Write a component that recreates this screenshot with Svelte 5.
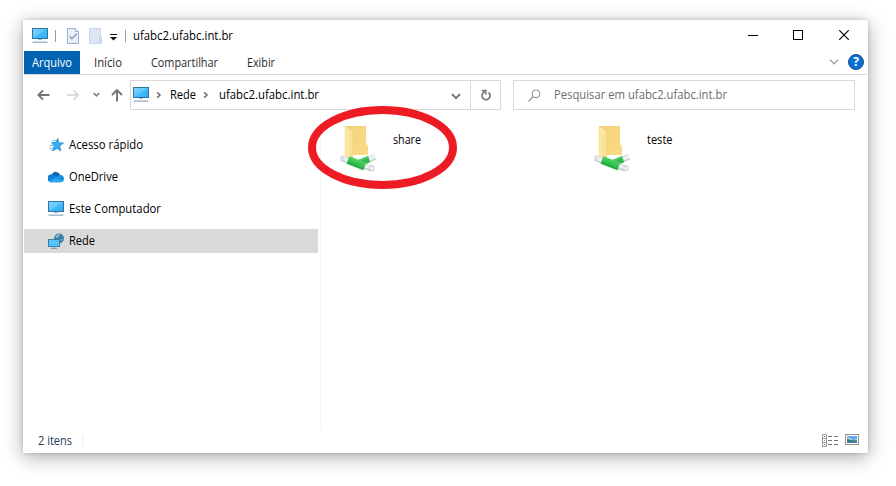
<script>
  const tabs = [
    { label: 'Início', width: 28, gap: 14 },
    { label: 'Compartilhar', width: 67, gap: 29 },
    { label: 'Exibir', width: 28, gap: 29 }
  ];
  const places = [
    { label: 'Acesso rápido', icon: 'star', width: 74 },
    { label: 'OneDrive', icon: 'cloud', width: 49 },
    { label: 'Este Computador', icon: 'pc', width: 92 },
    { label: 'Rede', icon: 'network', width: 26, active: true }
  ];
  const shares = [
    { label: 'share', width: 28 },
    { label: 'teste', width: 25.5 }
  ];
</script>

{#snippet label(text, width)}
  <svg class="label" style:width="{width}px" height="18"><text x="0" y="13" textLength={width} lengthAdjust="spacingAndGlyphs">{text}</text></svg>
{/snippet}

{#snippet monitor()}
  <svg class="icon16" viewBox="0 0 16 16">
    <defs><linearGradient id="screen" x1="0" y1="0" x2="1" y2="1"><stop offset="0" stop-color="#83d5ff" /><stop offset=".5" stop-color="#5cc5fb" /><stop offset=".52" stop-color="#42b9fa" /><stop offset="1" stop-color="#2caaf8" /></linearGradient></defs>
    <rect x=".5" y=".5" width="15" height="10" fill="url(#screen)" stroke="#34739c" />
    <path d="M6 11h4v1H6z" fill="#9eb7c5" />
    <path d="M1.5 13.2h13l1.5 1.6H0z" fill="#8eabbc" /><path d="M1.5 13.5h13" stroke="#d5e3eb" stroke-width=".7" />
  </svg>
{/snippet}

{#snippet chevron()}
  <svg class="crumb" width="6" height="8" viewBox="0 0 6 8"><path d="M1.2 1.3 4 4 1.2 6.7" fill="none" stroke="#707070" stroke-width="1.6" /></svg>
{/snippet}

<div class="desktop">
  <main class="window">
    <header class="title">
      <span class="app">{@render monitor()}</span>
      <i class="rule"></i>
      <svg class="check" width="12" height="16" viewBox="0 0 12 16">
        <path d="M.5.5h8l3 3v12H.5z" fill="#eaf0f9" stroke="#9bafd0" /><path d="M8.5.5v3h3" fill="#fff" stroke="#9bafd0" />
        <path d="m2.5 8.3 2.4 2.4L9.8 5.8" fill="none" stroke="#899dc2" stroke-width="1.4" />
      </svg>
      <svg class="new" width="13" height="16" viewBox="0 0 13 16"><path d="M.5.5h11v8.8h1v6.2H.5z" fill="#dde6f3" stroke="#c9d5e9" /><path d="M10.5 15V9.5h1" fill="none" stroke="#c0cde3" /></svg>
      <svg class="more" width="7" height="7" viewBox="0 0 7 7"><path d="M0 0h7v1H0zM0 3h7L3.5 6.5z" fill="#111" /></svg>
      <i class="rule"></i>
      <span class="caption">{@render label('ufabc2.ufabc.int.br', 100)}</span>
      <div class="controls">
        <svg width="10" height="10"><path d="M0 5.5h10" stroke="#000" /></svg>
        <svg width="10" height="10"><rect x=".5" y=".5" width="9" height="9" fill="none" stroke="#000" /></svg>
        <svg width="10" height="10"><path d="m.2.2 9.6 9.6m0-9.6L.2 9.8" stroke="#000" stroke-width="1.15" /></svg>
      </div>
    </header>
    <nav class="ribbon">
      <span class="file">{@render label('Arquivo', 40)}</span>
      {#each tabs as tab}
        <span style:margin-left="{tab.gap}px">{@render label(tab.label, tab.width)}</span>
      {/each}
      <div class="help">
        <svg width="10" height="6" viewBox="0 0 10 6"><path d="m1 .8 4 4 4-4" fill="none" stroke="#a0a0a0" stroke-width="1.3" /></svg>
        <b>?</b>
      </div>
    </nav>
    <div class="toolbar">
      <svg class="arrows" width="86" height="14" viewBox="0 0 86 14" fill="none">
        <path d="M12.5 7H1.5M6 2.3 1.3 7 6 11.7" stroke="#737373" stroke-width="1.8" />
        <path d="M30 7h11M36.5 2.3 41.2 7l-4.7 4.7" stroke="#d4d4d4" stroke-width="1.5" />
        <path d="m56.6 5 2.8 2.8L62.2 5" stroke="#808080" stroke-width="1.6" />
        <path d="M80 13.5V2.2M75 7l5-5 5 5" stroke="#737373" stroke-width="1.9" />
      </svg>
      <div class="address">
        {@render monitor()}
        {@render chevron()}
        <span class="root">{@render label('Rede', 26)}</span>
        {@render chevron()}
        <span class="host">{@render label('ufabc2.ufabc.int.br', 100)}</span>
        <svg class="drop" width="10" height="7" viewBox="0 0 10 7"><path d="m1 1.2 4 4 4-4" fill="none" stroke="#737373" stroke-width="1.9" /></svg>
        <div class="refresh"><svg width="12" height="12" viewBox="0 0 12 12" fill="none" stroke="#737373"><path d="M8.6 3.5A4 4 0 1 1 2.7 4.4L5.3 2" stroke-width="1.7" /><path d="M1.8 1.5h4.1v4.2" stroke-width="1.4" /></svg></div>
      </div>
      <div class="search">
        <svg width="13" height="13" viewBox="0 0 13 13"><circle cx="8" cy="4.8" r="3.9" fill="none" stroke="#8a8a92" /><path d="M5.2 7.6.5 12.3" stroke="#8a8288" stroke-width="1.1" /></svg>
        {@render label('Pesquisar em ufabc2.ufabc.int.br', 173)}
      </div>
    </div>
    <section class="content">
      <aside>
        {#each places as place}
          <div class="place" class:active={place.active}>
            {#if place.icon === 'star'}
              <svg class="icon16" viewBox="0 0 16 16"><path d="m9.8 1.5.9 4.3 4.8.2-3.8 3 1 4.9-3.7-2.6-4.3 2.5 1.6-4.7-2.6-3.4 4-.1z" fill="#37aef4" stroke="#1685d0" stroke-width=".8" /><path d="M5 3.5h2.5M3 5h2M2 8.5h3.5M1.5 11H5M2.5 13h2" stroke="#65b8e8" stroke-width=".9" /></svg>
            {:else if place.icon === 'cloud'}
              <svg class="icon16" viewBox="0 0 16 16"><path d="M4 5.2a4.5 4.5 0 0 1 8.2.7L14 8.5l-8 1z" fill="#0a62b3" /><path d="M3.4 13.2A4 4 0 0 1 3.6 5.2c2.2 0 3.4 1 4.5 2l4 4-2 1.2z" fill="#1180d3" /><path d="M8 8.5c1-1.6 2.4-2.2 4.1-2.4A3.6 3.6 0 0 1 16 9.8c0 1.8-1.4 3.4-3.4 3.4H3.2c-1 0-1.8-.4-2.3-1z" fill="#1490df" /><path d="m8 8.5 7.5 3.5c-.7.8-1.6 1.2-2.9 1.2H3.2c-1 0-1.8-.4-2.3-1z" fill="#28a8ea" /></svg>
            {:else if place.icon === 'pc'}
              {@render monitor()}
            {:else}
              <svg class="icon16" viewBox="0 0 16 16"><circle cx="11" cy="5.5" r="5" fill="#3c7fa5" /><path d="M7.5 3Q10 .5 12.5 1.5L10.5 4 8 5z" fill="#86bdd2" /><path d="m14 5 1 2-2 1z" fill="#86bdd2" /><rect x=".5" y="6.5" width="11" height="7" fill="#59c4fb" stroke="#397ca4" /><path d="M3 15.4h6M5 14h2" stroke="#7b9daf" /></svg>
            {/if}
            {@render label(place.label, place.width)}
          </div>
        {/each}
      </aside>
      <div class="files">
        {#each shares as share}
          <div class="share">
            <svg width="38" height="48" viewBox="0 0 38 48">
              <defs>
                <linearGradient id="back" x1="0" y1="0" x2="1" y2="1"><stop stop-color="#f0cf78" /><stop offset="1" stop-color="#ffdd86" /></linearGradient>
                <linearGradient id="front" x1="0" y1="0" x2="1" y2="0"><stop stop-color="#ffe9aa" /><stop offset="1" stop-color="#fbdd8d" /></linearGradient>
                <linearGradient id="tube" gradientUnits="userSpaceOnUse" x1="18" y1="34" x2="14.6" y2="42"><stop stop-color="#58d168" /><stop offset=".5" stop-color="#35c552" /><stop offset="1" stop-color="#1fa540" /></linearGradient>
              </defs>
              <path d="M5 1h21v18l2 2v9H5z" fill="url(#back)" />
              <path d="m5 1 8 5v28l-8-3z" fill="url(#front)" stroke="#eccf7c" stroke-width=".4" />
              <path d="m1.5 33.3 7 2.4M29 34.3l6-2.3M24 41.2l7.5 2.3" stroke="#c6cccd" stroke-width="5.8" />
              <path d="m1.5 32.8 7 2.4M29 33.8l6-2.3M24 40.6l7.5 2.3" stroke="#eef1f2" stroke-width="3.6" />
              <path d="m17 39 12-4.9" stroke="#2db64a" stroke-width="6.6" />
              <path d="m18 36.2 10.3-4.1" stroke="#54ce65" stroke-width="1.6" />
              <path d="m8 35 16.8 6.5" stroke="url(#tube)" stroke-width="8" />
              <ellipse cx="1.9" cy="33.2" rx="1.2" ry="2.3" fill="#f0f2f2" stroke="#b9c0c1" stroke-width=".6" />
              <ellipse cx="32" cy="43.3" rx="2.2" ry="2.8" fill="#f1f3f3" stroke="#b6bcbd" stroke-width=".7" />
            </svg>
            {@render label(share.label, share.width)}
          </div>
        {/each}
        <svg class="mark" width="150" height="84"><ellipse cx="74.5" cy="41.5" rx="70.5" ry="37.5" fill="none" stroke="#ed1c24" stroke-width="8" /></svg>
      </div>
    </section>
    <footer>
      {@render label('2 itens', 34)}
      <i></i>
      <div class="views">
        <svg width="16" height="13" viewBox="0 0 16 13"><path d="M.5.5h4v12h-4zM.5 4.5h4M.5 8.5h4" fill="none" stroke="#999" /><path d="M6 2.5h4m2 0h4M6 6.5h4m2 0h4M6 10.5h4m2 0h4" stroke="#737373" /><path d="M2 2h1v1H2z" fill="#555" /><path d="M2 6h1v1H2z" fill="#52a7d7" /><path d="M2 10h1v1H2z" fill="#cd2835" /></svg>
        <svg width="14" height="11" viewBox="0 0 14 11"><rect x=".5" y=".5" width="13" height="10" fill="#fff" stroke="#929292" /><path d="M2 2h10v7H2z" fill="#66a8ef" /><path d="M2 4q3-1 4 1t6 0v2H2z" fill="#bddbe9" /><path d="M2 5q2 0 4 1.3h6V8H2z" fill="#397669" /><path d="M2 7.5h10V9H2z" fill="#457ab5" /></svg>
      </div>
    </footer>
  </main>
</div>

<style>
  :global(body) { background: #fff; }
  * { box-sizing: border-box; }
  svg { display: block; flex: none; }
  .desktop { width: 896px; height: 486px; padding: 20px 28px 33px 23px; overflow: hidden; font: 12px "Open Sans", "Noto Sans", sans-serif; }
  .window { width: 845px; height: 433px; padding: 0 1px; background: #fff; display: flex; flex-direction: column; box-shadow: 0 4px 18px rgba(0,0,0,.34), 0 0 4px rgba(0,0,0,.16); }
  .label { overflow: visible; fill: currentColor; }
  .icon16 { width: 16px; height: 16px; }
  .title { height: 31px; display: flex; align-items: center; padding-left: 8px; }
  .app { margin-right: 7px; }
  .rule { width: 1px; height: 12px; background: #9c9c9c; }
  .check { margin-left: 11px; }
  .new { margin-left: 10px; }
  .more { margin: 3px 8px 0; }
  .caption { margin-left: 7px; }
  .controls { margin-left: auto; padding-right: 18px; display: flex; gap: 35px; }
  .controls svg { position: relative; top: -1px; }
  .controls svg:last-child { margin-left: 1px; }
  .ribbon { height: 24px; flex: none; border-bottom: 1px solid #d9d9d9; display: flex; align-items: center; color: #2b2b2b; }
  .file { width: 56px; height: 23px; padding: 3px 8px; background: #0063b1; color: #fff; }
  .help { margin: -2px 0 0 auto; padding-right: 3px; display: flex; align-items: center; gap: 9px; }
  .help b { width: 16px; height: 16px; border-radius: 50%; border: 1px solid #1d4f87; background: #0870d4; color: #fff; text-align: center; font-size: 12px; line-height: 14px; }
  .toolbar { height: 42px; flex: none; display: flex; align-items: flex-start; padding: 5px 0 0 12px; }
  .arrows { margin: 8px 7px 0 1px; }
  .address { width: 371px; height: 30px; border: 1px solid #d9d9d9; display: flex; align-items: center; padding-left: 2px; }
  .crumb { margin-left: 7px; }
  .root { margin-left: 8px; }
  .host { margin-left: 10px; }
  .drop { margin: 2px 9px 0 auto; }
  .refresh { width: 30px; height: 28px; border-left: 1px solid #d9d9d9; display: grid; place-items: center; }
  .search { margin-left: 12px; width: 342px; height: 30px; border: 1px solid #d9d9d9; display: flex; align-items: center; gap: 13px; padding-left: 14px; color: #6d6d6d; }
  .content { flex: 1; display: flex; }
  aside { width: 297px; padding: 16px 3px 0 0; border-right: 1px solid #f5f5f5; display: flex; flex-direction: column; gap: 8px; }
  .place { width: 294px; height: 24px; padding-left: 24px; display: flex; align-items: center; gap: 5px; }
  .active { background: #d9d9d9; }
  .files { position: relative; display: flex; padding: 8px 0 0 19px; }
  .share { width: 254px; display: flex; gap: 15px; }
  .share .label { margin-top: 6px; }
  .mark { position: absolute; left: -13px; top: -11px; }
  footer { height: 25px; display: flex; align-items: center; padding: 0 8px 0 14px; color: #1e395b; }
  footer i { width: 1px; height: 11px; margin-left: 10px; background: #ededed; }
  .views { margin-left: auto; display: flex; align-items: center; gap: 7px; }
  .views svg:last-child { position: relative; top: -1px; }
</style>
